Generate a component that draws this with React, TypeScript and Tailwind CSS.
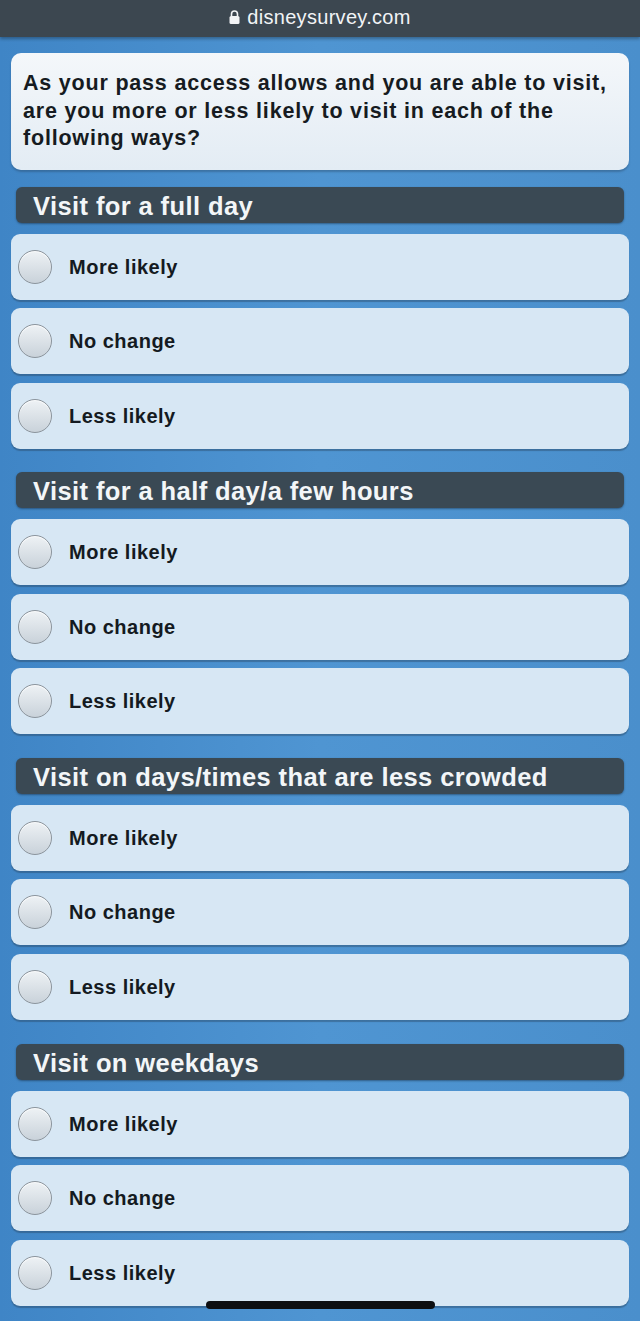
import React from "react";

const sections = [
  "Visit for a full day",
  "Visit for a half day/a few hours",
  "Visit on days/times that are less crowded",
  "Visit on weekdays",
];

const choices = ["More likely", "No change", "Less likely"];

function Radio() {
  return (
    <span className="block h-[34px] w-[34px] shrink-0 rounded-full border-[1.5px] border-[#8b949c] bg-gradient-to-b from-[#eef2f5] to-[#c9d2da] shadow-[inset_0_1px_1px_rgba(255,255,255,0.8)]" />
  );
}

function Option({ label }: { label: string }) {
  return (
    <label className="flex h-[66px] items-center rounded-[9px] bg-[#d7e7f4] pl-[7px] shadow-[0_2px_1px_rgba(40,70,100,0.45)]">
      <Radio />
      <span className="ml-[17px] text-[20px] font-bold tracking-[0.5px] text-[#141a21]">{label}</span>
    </label>
  );
}

export default function App() {
  return (
    <div
      className="min-h-[1321px] w-[640px] bg-gradient-to-r from-[#3f85c6] via-[#4f95d2] to-[#4a8fcc]"
      style={{ fontFamily: '"Liberation Sans", Arial, sans-serif' }}
    >
      <div className="flex h-[37px] items-center justify-center gap-[7px] bg-[#3c4750] pb-[4px] shadow-[0_2px_3px_rgba(0,0,0,0.3)]">
        <svg width="11" height="14" viewBox="0 0 11 14" className="mt-[1px]">
          <path d="M2.5 6V4a3 3 0 0 1 6 0v2" fill="none" stroke="#f2f4f6" strokeWidth="1.6" />
          <rect x="0.5" y="6" width="10" height="8" rx="1.5" fill="#f2f4f6" />
        </svg>
        <span className="text-[20px] tracking-[0.3px] text-[#f2f4f6]">disneysurvey.com</span>
      </div>

      <div className="px-[11px] pt-[16px] pb-[15px]">
        <div className="rounded-[10px] bg-gradient-to-b from-[#f4f7fa] to-[#e3ecf4] px-[12px] py-[17px] shadow-[0_2px_2px_rgba(40,70,100,0.4)]">
          <p className="text-[21.5px] font-bold leading-[27.5px] tracking-[0.8px] text-[#161b21]">
            As your pass access allows and you are able to visit, are you more or less likely to visit in each of the following ways?
          </p>
        </div>

        {sections.map((title) => (
          <div key={title} className="pt-[17px] pb-[6.7px]">
            <div className="mx-[5px] flex h-[36px] items-center rounded-[6px] bg-[#3a4954] px-[17px] pt-[4px] shadow-[0_1px_2px_rgba(20,40,60,0.5)]">
              <span className="text-[25.5px] font-bold leading-none tracking-[0.4px] text-[#f3f6f8]">{title}</span>
            </div>
            <div className="mt-[11px] flex flex-col gap-[8.5px]">
              {choices.map((c) => (
                <Option key={c} label={c} />
              ))}
            </div>
          </div>
        ))}
      </div>

      <div className="pointer-events-none fixed left-[206px] top-[1301px] h-[8px] w-[229px] rounded-full bg-[#0d0f12]" />
    </div>
  );
}
